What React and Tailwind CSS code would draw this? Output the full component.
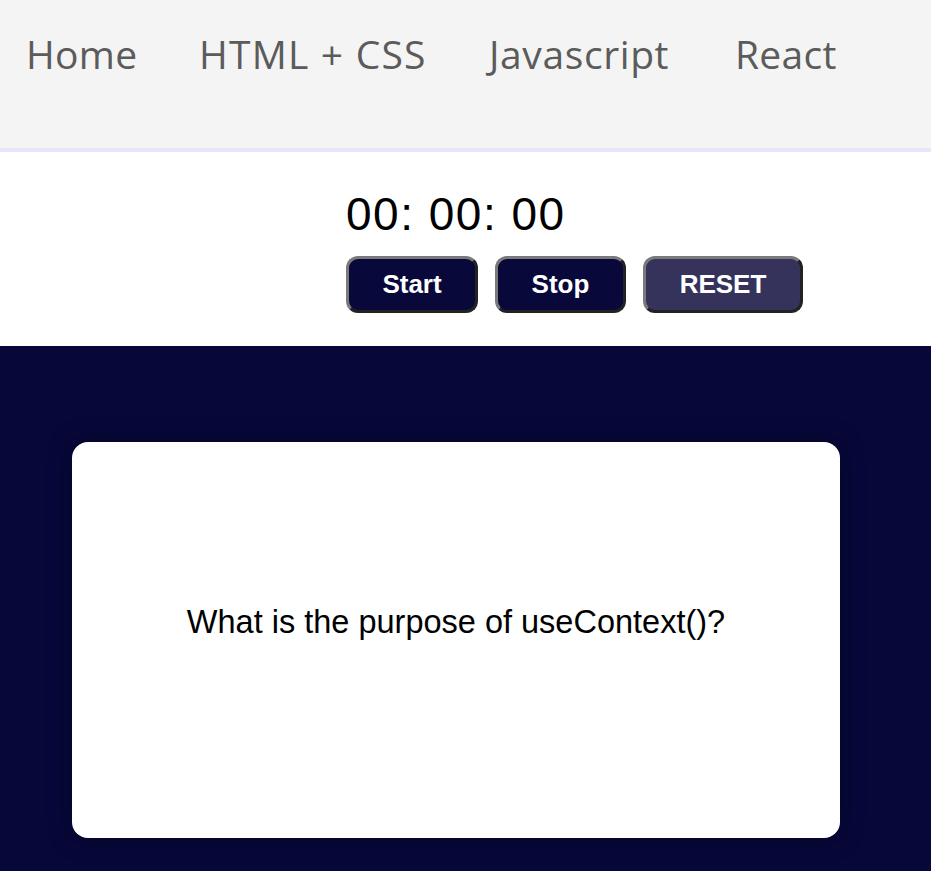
import React from "react";

export default function App() {
  const btn =
    "h-[57px] rounded-[12px] border-[3px] border-t-[#7a7a7a] border-l-[#7a7a7a] border-b-[#222] border-r-[#222] text-white font-bold text-[26px] flex items-center justify-center";
  return (
    <div className="w-[931px] h-[871px] overflow-hidden bg-white" style={{ fontFamily: '"Liberation Sans", Arial, sans-serif' }}>
      <nav className="h-[152px] bg-[#f4f4f4] border-b-[4px] border-[#e7e5fb] flex items-start pt-[26px] pl-[26px] text-[39px] leading-[56px] text-[#5b5b5b] tracking-[0.3px]" style={{ fontFamily: '"Open Sans", sans-serif' }}>
        <span className="w-[173px]">Home</span>
        <span className="w-[290px] tracking-[1.2px]">HTML + CSS</span>
        <span className="w-[246px] tracking-[0.6px]">Javascript</span>
        <span>React</span>
      </nav>
      <div className="h-[194px] pl-[346px] flex flex-col">
        <div className="pt-[36px] text-[46px] leading-[52px] text-black tracking-[1.5px]">00: 00: 00</div>
        <div className="flex gap-[17px] mt-[16px]">
          <button className={btn + " w-[132px] bg-[#08083a]"}>Start</button>
          <button className={btn + " w-[131px] bg-[#08083a]"}>Stop</button>
          <button className={btn + " w-[160px] bg-[#35335c]"}>RESET</button>
        </div>
      </div>
      <div className="h-[525px] bg-[#07073a] pt-[96px] pl-[72px]">
        <div className="w-[768px] h-[396px] bg-white rounded-[16px] shadow-[0_0_24px_rgba(0,0,0,0.35)] flex items-center justify-center text-[32.5px] text-black pb-[36px]">
          What is the purpose of useContext()?
        </div>
      </div>
    </div>
  );
}
